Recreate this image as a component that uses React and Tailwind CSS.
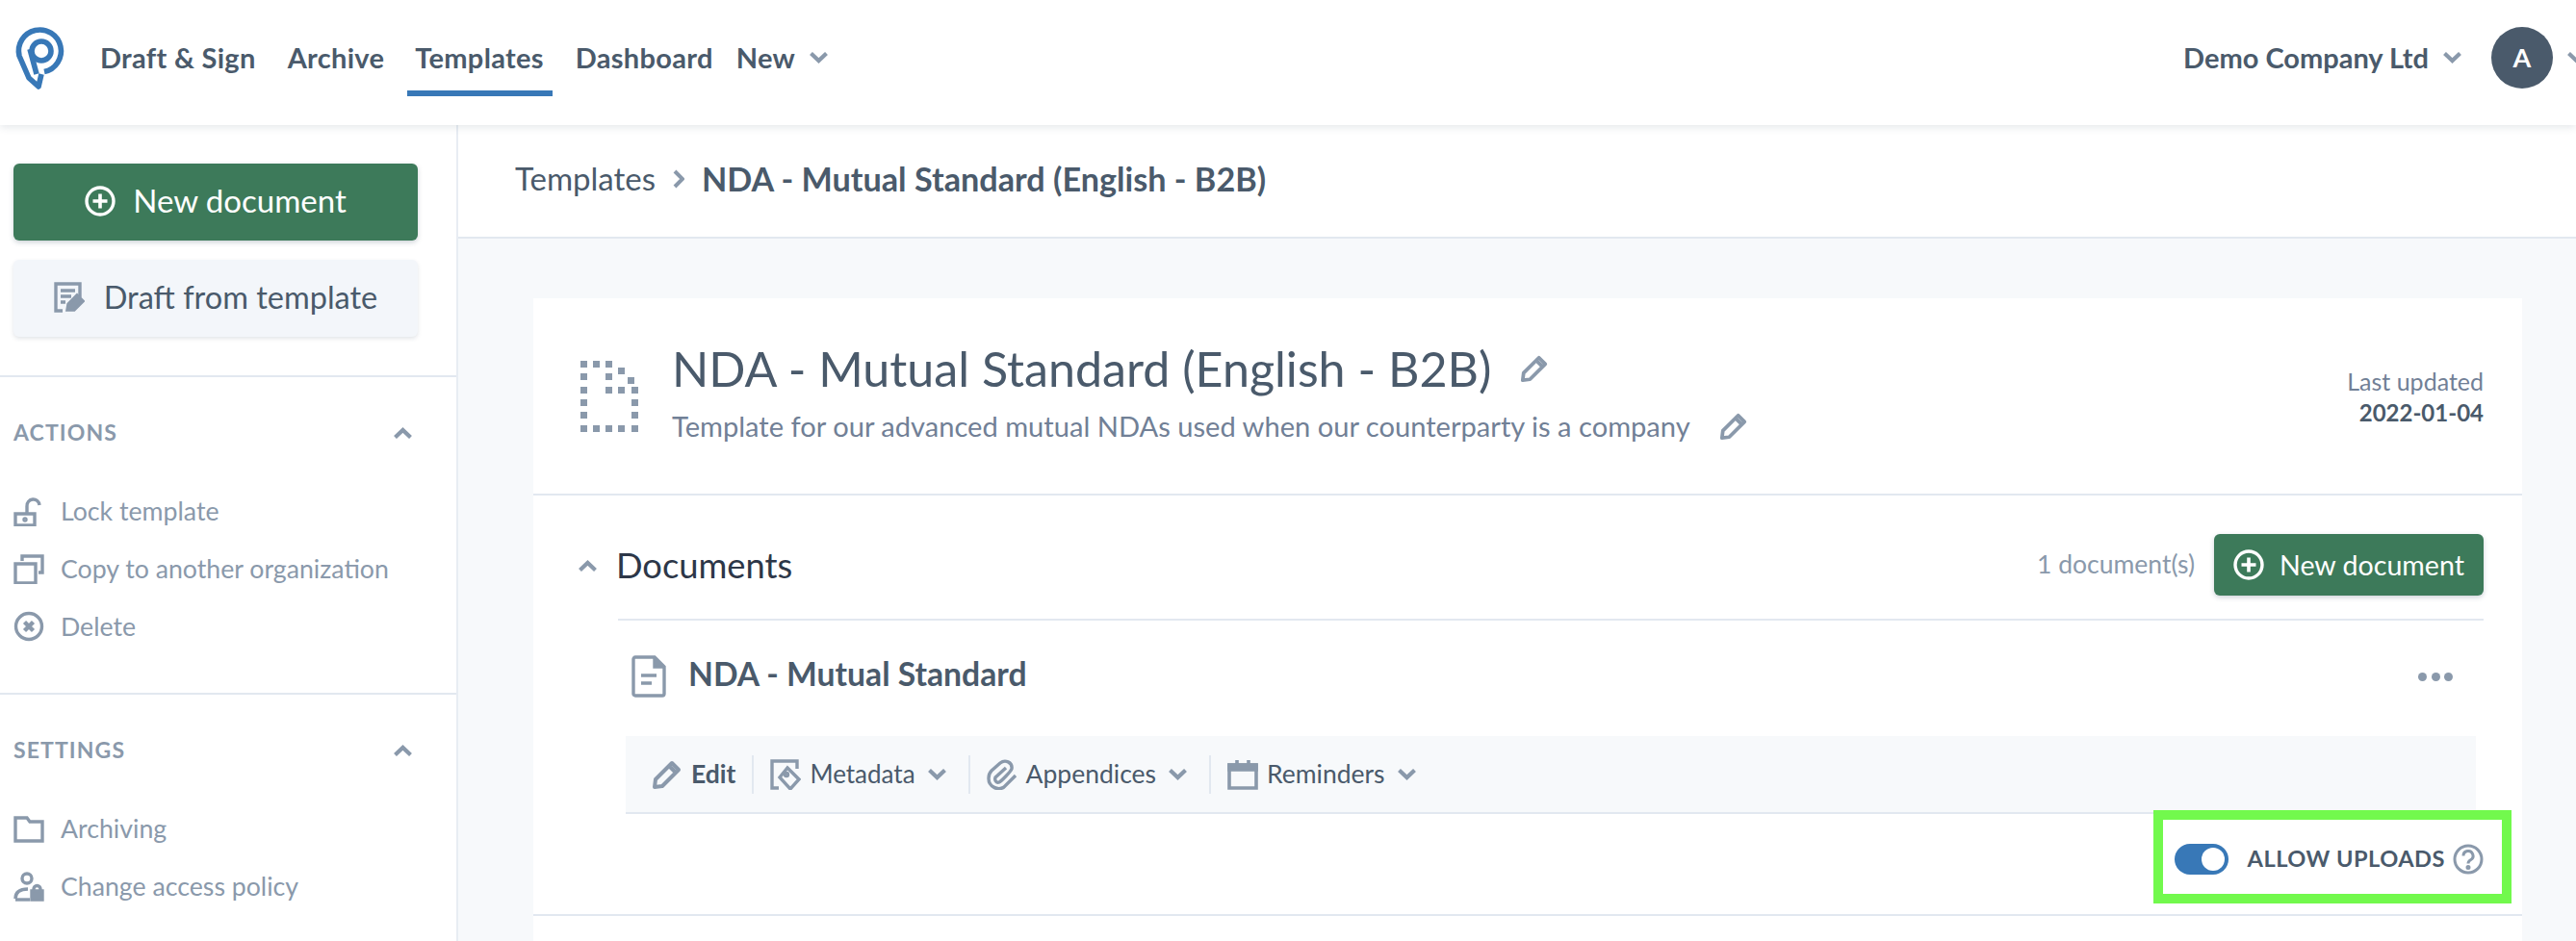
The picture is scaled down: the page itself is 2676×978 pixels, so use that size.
import React from "react";

const Chevron = ({ className = "", up = false }) => (
  <svg viewBox="0 0 20 12" className={className} fill="none" stroke="#8a99ab" strokeWidth="4.2">
    <path d={up ? "M2 10.5 L10 3 L18 10.5" : "M2 1.5 L10 9 L18 1.5"} />
  </svg>
);

const PlusCircle = ({ className = "" }) => (
  <svg viewBox="0 0 32 32" className={className} fill="none" stroke="#fff">
    <circle cx="16" cy="16" r="14" strokeWidth="3.4" />
    <path d="M16 8.5v15M8.5 16h15" strokeWidth="3.6" />
  </svg>
);

const Pencil = ({ className = "" }) => (
  <svg viewBox="0 0 32 32" className={className} fill="none" stroke="#8a99ab" strokeWidth="4">
    <path d="M3 29l1-8L21 4l7 7-17 17zM18 7l7 7" strokeLinejoin="round" />
  </svg>
);

const Logo = () => (
  <svg viewBox="0 0 90 90" className="w-[90px] h-[90px] shrink-0 ml-[2px]" fill="none" stroke="#3878b7" strokeWidth="5.6">
    <path d="M44 59.5 A22 22 0 1 0 18 43 L28 66 L38 75 L41 62" strokeLinejoin="round" />
    <circle cx="41" cy="38" r="10" />
    <path d="M29 36 L36 62" />
  </svg>
);

const DottedDoc = () => {
  const dots = [
    [0, 0], [13, 0], [26, 0], [39, 7], [49, 17],
    [0, 13], [26, 13],
    [0, 27], [26, 27], [39, 27], [53, 27],
    [0, 40], [53, 40],
    [0, 53], [53, 53],
    [0, 67], [13, 67], [26, 67], [39, 67], [53, 67],
  ];
  return (
    <svg viewBox="0 0 60 74" className="w-[60px] h-[74px] shrink-0" fill="#8a99ab">
      {dots.map(([x, y], i) => (
        <rect key={i} x={x} y={y} width="7" height="7" />
      ))}
    </svg>
  );
};

const sideIcons = {
  lock: (
    <>
      <path d="M2 19h20v12H2z" />
      <path d="M14 19v-8a6.500 6.500 0 0 1 13-1" />
      <circle cx="12" cy="25" r="1" fill="#8a99ab" />
    </>
  ),
  copy: (
    <>
      <path d="M2 11h21v20H2z" />
      <path d="M9 8V3h21v17h-4" />
    </>
  ),
  remove: (
    <>
      <circle cx="16" cy="16" r="13.500" />
      <path d="M11.500 11.500l9 9M20.500 11.500l-9 9" strokeWidth="4.4" />
    </>
  ),
  folder: <path d="M2 5h12l3 4h13v20H2z" />,
  access: (
    <>
      <circle cx="14" cy="8" r="5" />
      <path d="M2 29c0-7 5-10 13-10" />
      <path d="M2 30h15" />
      <path d="M19 21h11v9H19z" fill="#8a99ab" />
      <path d="M21 21v-2a3.500 3.500 0 0 1 7 0v2" />
    </>
  ),
};

const SideItem = ({ icon, label }) => (
  <div className="h-[60px] flex items-center gap-[17px] text-[26.7px] text-[#8a99ab]">
    <svg viewBox="0 0 32 32" className="w-[32px] h-[32px] shrink-0" fill="none" stroke="#8a99ab" strokeWidth="3.4">
      {sideIcons[icon]}
    </svg>
    {label}
  </div>
);

const SideSection = ({ title, children, className = "" }) => (
  <div className={`border-b-2 border-[#e2e8f0] px-[14px] ${className}`}>
    <div className="flex items-center justify-between pt-[6px] pr-[31px] h-[109px]">
      <span className="text-[23px] font-bold tracking-[1.1px] text-[#8a99ab]">{title}</span>
      <Chevron up className="w-[21px] h-[12px]" />
    </div>
    <div className="pb-[39px]">{children}</div>
  </div>
);

const ToolItem = ({ icon, label, bold, caret, sep, size = "text-[26.5px]" }) => (
  <div className={`flex items-center h-[40px] ${sep ? "border-r-2 border-[#e2e8f0]" : ""}`}>
    <div className="flex items-center gap-[9px] pr-[17px]">
      {icon}
      <span className={`${size} text-[#4a5a6b] ${bold ? "font-bold" : ""}`}>{label}</span>
      {caret && <Chevron className="w-[21px] h-[12px] ml-[3px] mr-[5px]" />}
    </div>
  </div>
);

export default function App() {
  return (
    <div className="relative w-[2676px] h-[978px] overflow-hidden bg-white font-['Lato','Open_Sans',sans-serif] text-[#4a5a6b]">
      <header className="relative z-10 h-[130px] flex items-center bg-white shadow-[0_2px_8px_rgba(60,80,100,0.14)] pb-[10px]">
        <Logo />
        <nav className="flex items-center text-[29px] tracking-[0.3px] font-bold ml-[12px]">
          <span>Draft &amp; Sign</span>
          <span className="ml-[33px]">Archive</span>
          <span className="relative ml-[32px]">
            Templates
            <span className="absolute -left-[8px] -right-[9px] top-[56px] h-[6px] bg-[#3878b7]" />
          </span>
          <span className="ml-[33px]">Dashboard</span>
          <span className="ml-[24px]">New</span>
          <Chevron className="w-[21px] h-[12px] ml-[14px]" />
        </nav>
        <div className="ml-auto -mr-[11px] flex items-center">
          <span className="text-[29px] font-bold">Demo Company Ltd</span>
          <Chevron className="w-[21px] h-[12px] ml-[14px]" />
          <span className="w-[64px] h-[64px] rounded-full bg-[#4a5a6b] text-white text-[27px] font-bold flex items-center justify-center ml-[30px]">
            A
          </span>
          <Chevron className="w-[21px] h-[12px] ml-[14px] shrink-0" />
        </div>
      </header>

      <div className="flex h-[848px]">
        <aside className="w-[476px] shrink-0 bg-white border-r-2 border-[#e8edf3]">
          <div className="px-[14px] pt-[40px] pb-[40px] border-b-2 border-[#e2e8f0]">
            <div className="h-[80px] w-[420px] pb-[2px] rounded-[6px] bg-[#3d7a5a] text-white text-[33px] flex items-center justify-center gap-[18px] shadow-[0_2px_5px_rgba(60,80,100,0.25)]">
              <PlusCircle className="w-[32px] h-[32px]" />
              New document
            </div>
            <div className="h-[80px] w-[420px] mt-[20px] pb-[2px] rounded-[6px] bg-[#f3f6fa] text-[32.5px] flex items-center justify-center gap-[20px] shadow-[0_2px_4px_rgba(60,80,100,0.15)]">
              <svg viewBox="0 0 32 32" className="w-[32px] h-[32px] shrink-0" fill="none" stroke="#8a99ab" strokeWidth="3.4">
                <path d="M9 30H2V2h25v14" />
                <path d="M7 9h15M7 15h11M7 21h5" />
                <path d="M14 29l1-6 9-9 6 6-9 9z" fill="#8a99ab" />
              </svg>
              Draft from template
            </div>
          </div>
          <SideSection title="ACTIONS">
            <SideItem icon="lock" label="Lock template" />
            <SideItem icon="copy" label="Copy to another organization" />
            <SideItem icon="remove" label="Delete" />
          </SideSection>
          <SideSection title="SETTINGS" className="border-b-0">
            <SideItem icon="folder" label="Archiving" />
            <SideItem icon="access" label="Change access policy" />
          </SideSection>
        </aside>

        <main className="flex-1 flex flex-col bg-[#f7f9fb]">
          <div className="h-[118px] shrink-0 bg-white border-b-2 border-[#e2e8f0] flex items-center pl-[59px] pb-[4px]">
            <span className="text-[33px]">Templates</span>
            <svg viewBox="0 0 12 20" className="w-[12px] h-[20px] mx-[18px]" fill="none" stroke="#8a99ab" strokeWidth="4">
              <path d="M2 2l8 8-8 8" />
            </svg>
            <span className="text-[34.2px] font-bold">NDA - Mutual Standard (English - B2B)</span>
          </div>

          <div className="flex-1 ml-[78px] mr-[56px] mt-[62px] bg-white">
            <div className="h-[205px] border-b-2 border-[#e2e8f0] flex pl-[49px] pr-[40px]">
              <div className="pt-[65px]">
                <DottedDoc />
              </div>
              <div className="ml-[35px] pt-[40px]">
                <div className="flex items-center">
                  <span className="text-[50.2px] leading-[66px]">NDA - Mutual Standard (English - B2B)</span>
                  <Pencil className="w-[30px] h-[30px] ml-[30px]" />
                </div>
                <div className="flex items-center mt-[5px] text-[29.1px] text-[#718096]">
                  <span>Template for our advanced mutual NDAs used when our counterparty is a company</span>
                  <Pencil className="w-[30px] h-[30px] ml-[30px]" />
                </div>
              </div>
              <div className="ml-auto pt-[70px] text-right">
                <div className="text-[25px] leading-[33px] text-[#718096]">Last updated</div>
                <div className="text-[24px] leading-[32px] font-bold">2022-01-04</div>
              </div>
            </div>

            <div className="pl-[46px] pr-[40px] border-b-2 border-[#e2e8f0] pb-[10px]">
              <div className="flex h-[130px]">
                <div className="w-[42px] shrink-0 flex items-center pt-[16px]">
                  <Chevron up className="w-[21px] h-[12px]" />
                </div>
                <div className="flex-1 flex items-center pt-[16px] border-b-2 border-[#e2e8f0]">
                  <span className="-ml-[2px] text-[36.3px] text-[#2d3748]">Documents</span>
                  <span className="ml-auto text-[26.5px] text-[#8a99ab]">1 document(s)</span>
                  <div className="ml-[20px] w-[280px] h-[64px] rounded-[6px] bg-[#3d7a5a] text-white text-[28.6px] flex items-center justify-center gap-[16px] shadow-[0_2px_5px_rgba(60,80,100,0.25)]">
                    <PlusCircle className="w-[32px] h-[32px]" />
                    New document
                  </div>
                </div>
              </div>

              <div className="pl-[42px]">
                <div className="h-[120px] flex items-start pl-[14px] pr-[32px] pt-[36px]">
                  <svg viewBox="0 0 36 44" className="w-[36px] h-[44px] shrink-0" fill="none" stroke="#8a99ab" strokeWidth="3.4">
                    <path d="M4 2h20l10 10v28a2 2 0 0 1-2 2H4a2 2 0 0 1-2-2V4a2 2 0 0 1 2-2z" />
                    <path d="M24 2v10h10" fill="#8a99ab" />
                    <path d="M10 21h16M10 29h11" />
                  </svg>
                  <span className="ml-[23px] text-[33.7px] font-bold leading-[38px]">NDA - Mutual Standard</span>
                  <div className="ml-auto flex gap-[4.5px] pt-[18px]">
                    <span className="w-[9px] h-[9px] rounded-full bg-[#8a99ab]" />
                    <span className="w-[9px] h-[9px] rounded-full bg-[#8a99ab]" />
                    <span className="w-[9px] h-[9px] rounded-full bg-[#8a99ab]" />
                  </div>
                </div>

                <div className="ml-[8px] mr-[8px] h-[81px] bg-[#f7f9fb] border-b-2 border-[#e2e8f0] flex items-center pl-[27px]">
                  <ToolItem
                    bold
                    sep
                    label="Edit"
                    icon={<Pencil className="w-[32px] h-[32px]" />}
                  />
                  <div className="w-[17px]" />
                  <ToolItem
                    caret
                    sep
                    size="text-[26px]"
                    label="Metadata"
                    icon={
                      <svg viewBox="0 0 32 32" className="w-[32px] h-[32px] shrink-0" fill="none" stroke="#8a99ab" strokeWidth="3.4">
                        <path d="M9 30H2V2h26v8" />
                        <path d="M18 9l12 12-9 10-11-12z" />
                        <circle cx="17" cy="16" r="1.500" />
                      </svg>
                    }
                  />
                  <div className="w-[17px]" />
                  <ToolItem
                    caret
                    sep
                    label="Appendices"
                    icon={
                      <svg viewBox="0 0 32 32" className="w-[32px] h-[32px] shrink-0" fill="none" stroke="#8a99ab" strokeWidth="3.4">
                        <path d="M30 17L18 29C12 33 2 29 2 20c0-3 1-6 3-8L14 4c5-4 13-1 12 6-1 3-11 13-13 14-3 1-5-2-4-5L20 9" />
                      </svg>
                    }
                  />
                  <div className="w-[17px]" />
                  <ToolItem
                    caret
                    label="Reminders"
                    icon={
                      <svg viewBox="0 0 32 32" className="w-[32px] h-[32px] shrink-0" fill="none" stroke="#8a99ab" strokeWidth="3.6">
                        <path d="M2 6h28v24H2z" />
                        <path d="M2 6h28v5H2z" fill="#8a99ab" />
                        <path d="M10 1v6M22 1v6" />
                      </svg>
                    }
                  />
                </div>

                <div className="h-[94px] flex items-center justify-end">
                  <span className="relative w-[56px] h-[32px] rounded-full bg-[#3878b7]">
                    <span className="absolute right-[4px] top-[4px] w-[24px] h-[24px] rounded-full bg-white" />
                  </span>
                  <span className="ml-[20px] text-[23.6px] font-bold tracking-[0.5px]">ALLOW UPLOADS</span>
                  <svg viewBox="0 0 32 32" className="w-[32px] h-[32px] ml-[8px] shrink-0" fill="none" stroke="#8a99ab" strokeWidth="3">
                    <circle cx="16" cy="16" r="14" />
                    <path d="M11 12.500a5 5 0 1 1 7.500 4.300c-1.700 1-2.500 1.700-2.500 3.700" />
                    <circle cx="16" cy="24.500" r="1" fill="#8a99ab" />
                  </svg>
                </div>
              </div>
            </div>
          </div>
        </main>
      </div>

      {/* green highlight drawn on top of the page */}
      <div className="absolute left-[2237px] top-[842px] w-[372px] h-[97px] border-[10px] border-[#72f94d]" />
    </div>
  );
}
